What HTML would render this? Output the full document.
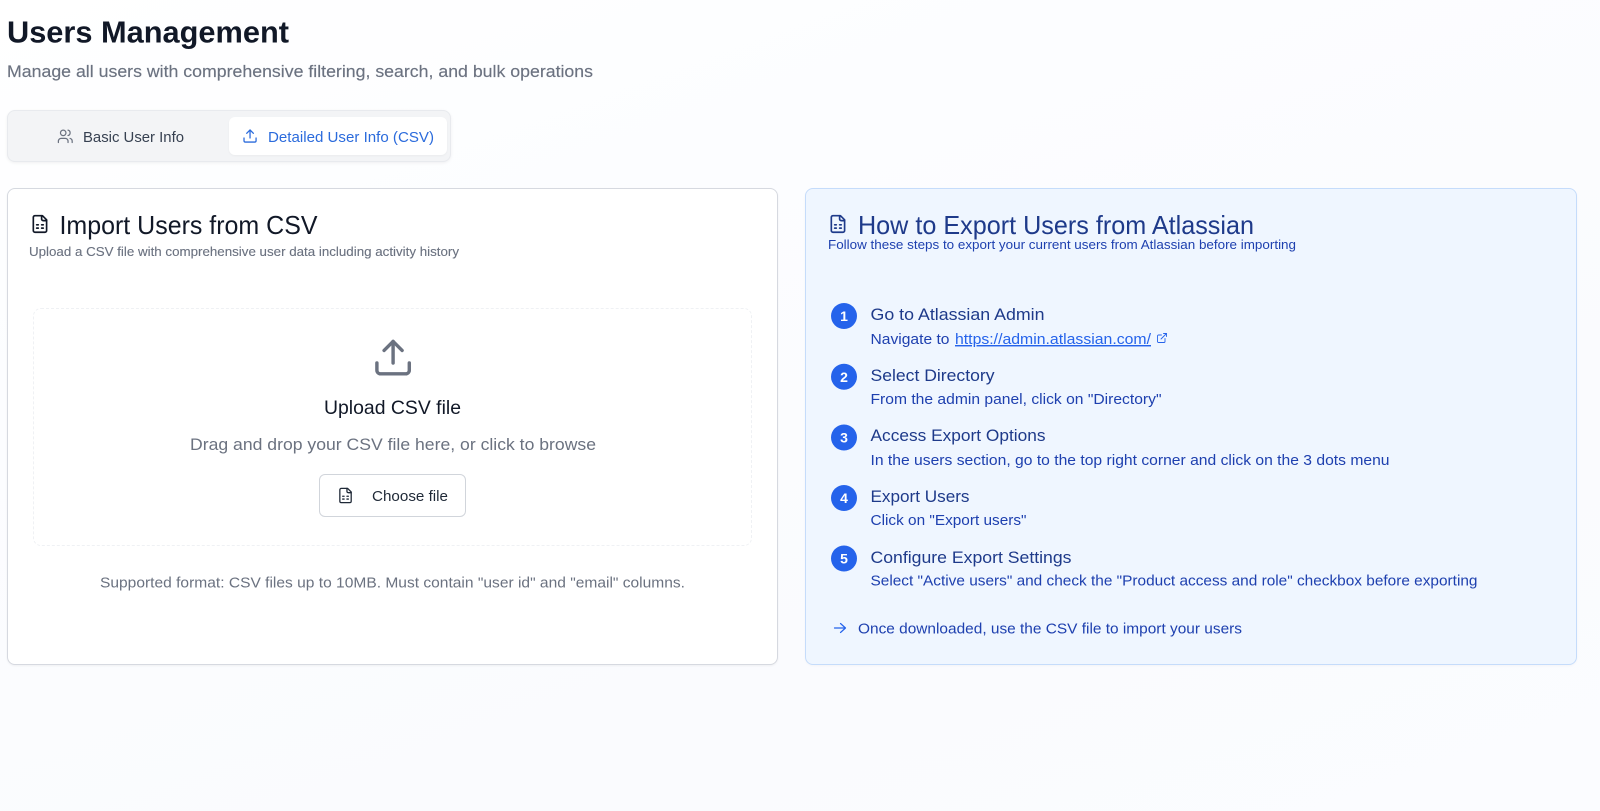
<!DOCTYPE html>
<html lang="en">
<head>
<meta charset="utf-8">
<title>Users Management</title>
<style>
html,body{margin:0;padding:0;width:1600px;height:811px;overflow:hidden}
body{position:relative;background:linear-gradient(160deg,#ffffff 0%,#fcfdff 30%,#fafbfe 70%,#fbfcff 100%);font-family:"Liberation Sans",sans-serif}
.box{position:absolute;box-sizing:border-box}
#tabs{left:7px;top:110px;width:444px;height:52px;background:#f3f4f6;border:1px solid #e8eaee;border-radius:8px;box-shadow:0 1px 3px rgba(0,0,0,.06)}
#active{left:229px;top:117px;width:218px;height:38px;background:#fff;border-radius:6px;box-shadow:0 1px 2px rgba(0,0,0,.04)}
#left{left:7px;top:188px;width:771px;height:477px;background:#fff;border:1px solid #d6d9e0;border-radius:8px;box-shadow:0 1px 2px rgba(0,0,0,.05)}
#right{left:805px;top:188px;width:772px;height:477px;background:#eff6ff;border:1px solid #c5dcfb;border-radius:8px;box-shadow:0 1px 2px rgba(0,0,0,.03)}
#drop{left:33px;top:308px;width:719px;height:238px;border:1.500px dashed #eff1f4;border-radius:8px}
#btn{left:319px;top:474px;width:147px;height:43px;background:#fff;border:1px solid #d1d5db;border-radius:6px}
svg#s{position:absolute;left:0;top:0;filter:blur(.25px)}
text{font-family:"Liberation Sans",sans-serif}
.ic{fill:none;stroke-linecap:round;stroke-linejoin:round}
</style>
</head>
<body>
<div class="box" id="tabs"></div>
<div class="box" id="active"></div>
<div class="box" id="left"></div>
<div class="box" id="right"></div>
<div class="box" id="drop"></div>
<div class="box" id="btn"></div>
<svg id="s" width="1600" height="811" viewBox="0 0 1600 811" xmlns="http://www.w3.org/2000/svg">
<text x="7" y="42.500" font-size="31" font-weight="700" fill="#111827" textLength="282" lengthAdjust="spacingAndGlyphs">Users Management</text>
<text x="7" y="77" font-size="17" fill="#6b7280" stroke="#6b7280" stroke-width=".15" textLength="586" lengthAdjust="spacingAndGlyphs">Manage all users with comprehensive filtering, search, and bulk operations</text>
<text x="83" y="142" font-size="14.500" fill="#374151" textLength="101" lengthAdjust="spacingAndGlyphs">Basic User Info</text>
<text x="268" y="142" font-size="14.500" fill="#2b6bdc" textLength="166" lengthAdjust="spacingAndGlyphs">Detailed User Info (CSV)</text>
<text x="59.500" y="234" font-size="26" fill="#111827" textLength="258" lengthAdjust="spacingAndGlyphs">Import Users from CSV</text>
<text x="29" y="256" font-size="12.500" fill="#6b7280" stroke="#6b7280" stroke-width=".12" textLength="430" lengthAdjust="spacingAndGlyphs">Upload a CSV file with comprehensive user data including activity history</text>
<text x="324" y="414" font-size="19.500" fill="#111827" textLength="137" lengthAdjust="spacingAndGlyphs">Upload CSV file</text>
<text x="190" y="450" font-size="17" fill="#6b7280" textLength="406" lengthAdjust="spacingAndGlyphs">Drag and drop your CSV file here, or click to browse</text>
<text x="372" y="501" font-size="14.500" fill="#1f2937" textLength="76" lengthAdjust="spacingAndGlyphs">Choose file</text>
<text x="100" y="587.500" font-size="14.500" fill="#6b7280" textLength="585" lengthAdjust="spacingAndGlyphs">Supported format: CSV files up to 10MB. Must contain "user id" and "email" columns.</text>

<text x="858" y="234" font-size="26" fill="#1e3a8a" textLength="396" lengthAdjust="spacingAndGlyphs">How to Export Users from Atlassian</text>
<text x="828" y="249" font-size="12.500" fill="#1e40af" textLength="468" lengthAdjust="spacingAndGlyphs">Follow these steps to export your current users from Atlassian before importing</text>

<circle cx="844" cy="316" r="13" fill="#2563eb"/>
<circle cx="844" cy="376.700" r="13" fill="#2563eb"/>
<circle cx="844" cy="437.500" r="13" fill="#2563eb"/>
<circle cx="844" cy="498" r="13" fill="#2563eb"/>
<circle cx="844" cy="558.500" r="13" fill="#2563eb"/>
<g font-size="14" font-weight="700" fill="#fff" text-anchor="middle">
<text x="844" y="321">1</text>
<text x="844" y="382">2</text>
<text x="844" y="442.500">3</text>
<text x="844" y="503">4</text>
<text x="844" y="563.500">5</text>
</g>

<text x="870.500" y="320" font-size="17" fill="#1e3a8a" textLength="174" lengthAdjust="spacingAndGlyphs">Go to Atlassian Admin</text>
<text x="870.500" y="344" font-size="14.500" fill="#1e40af" textLength="79" lengthAdjust="spacingAndGlyphs">Navigate to</text>
<text x="955" y="344" font-size="14.500" fill="#2563eb" text-decoration="underline" textLength="196" lengthAdjust="spacingAndGlyphs">https://admin.atlassian.com/</text>
<g class="ic" stroke="#2563eb" stroke-width="1.800" transform="translate(1156,332) scale(.5)">
<path d="M18 13v6a2 2 0 0 1-2 2H5a2 2 0 0 1-2-2V8a2 2 0 0 1 2-2h6"/><path d="M15 3h6v6"/><path d="M10 14 21 3"/>
</g>

<text x="870.500" y="381" font-size="17" fill="#1e3a8a" textLength="124" lengthAdjust="spacingAndGlyphs">Select Directory</text>
<text x="870.500" y="404" font-size="14.500" fill="#1e40af" textLength="291" lengthAdjust="spacingAndGlyphs">From the admin panel, click on "Directory"</text>

<text x="870.500" y="441" font-size="17" fill="#1e3a8a" textLength="175" lengthAdjust="spacingAndGlyphs">Access Export Options</text>
<text x="870.500" y="465" font-size="14.500" fill="#1e40af" textLength="519" lengthAdjust="spacingAndGlyphs">In the users section, go to the top right corner and click on the 3 dots menu</text>

<text x="870.500" y="502" font-size="17" fill="#1e3a8a" textLength="99" lengthAdjust="spacingAndGlyphs">Export Users</text>
<text x="870.500" y="525" font-size="14.500" fill="#1e40af" textLength="156" lengthAdjust="spacingAndGlyphs">Click on "Export users"</text>

<text x="870.500" y="563" font-size="17" fill="#1e3a8a" textLength="201" lengthAdjust="spacingAndGlyphs">Configure Export Settings</text>
<text x="870.500" y="585.500" font-size="14.500" fill="#1e40af" textLength="607" lengthAdjust="spacingAndGlyphs">Select "Active users" and check the "Product access and role" checkbox before exporting</text>

<text x="858" y="633.500" font-size="14.500" fill="#1e40af" textLength="384" lengthAdjust="spacingAndGlyphs">Once downloaded, use the CSV file to import your users</text>
<path class="ic" stroke="#2563eb" stroke-width="1.200" d="M834.500 628h11M840.500 623.500l5 4.500-5 4.500"/>

<g class="ic" stroke="#6b7280" stroke-width="1.800" transform="translate(57,128) scale(.69)">
<path d="M16 21v-2a4 4 0 0 0-4-4H6a4 4 0 0 0-4 4v2"/><circle cx="9" cy="7" r="4"/><path d="M22 21v-2a4 4 0 0 0-3-3.870"/><path d="M16 3.130a4 4 0 0 1 0 7.750"/>
</g>
<g class="ic" stroke="#2b6bdc" stroke-width="1.900" transform="translate(242,128) scale(.67)">
<path d="M21 15v4a2 2 0 0 1-2 2H5a2 2 0 0 1-2-2v-4"/><path d="M17 8l-5-5-5 5"/><path d="M12 3v12"/>
</g>
<g class="ic" stroke="#111827" stroke-width="2" transform="translate(30,214) scale(.83)">
<path d="M15 2H6a2 2 0 0 0-2 2v16a2 2 0 0 0 2 2h12a2 2 0 0 0 2-2V7z"/><path d="M14 2v4a2 2 0 0 0 2 2h4"/><path d="M8 13h2M14 13h2M8 17h2M14 17h2"/>
</g>
<g class="ic" stroke="#1e3a8a" stroke-width="2" transform="translate(828,214) scale(.83)">
<path d="M15 2H6a2 2 0 0 0-2 2v16a2 2 0 0 0 2 2h12a2 2 0 0 0 2-2V7z"/><path d="M14 2v4a2 2 0 0 0 2 2h4"/><path d="M8 13h2M14 13h2M8 17h2M14 17h2"/>
</g>
<g class="ic" stroke="#1f2937" stroke-width="1.800" transform="translate(337,487) scale(.71)">
<path d="M15 2H6a2 2 0 0 0-2 2v16a2 2 0 0 0 2 2h12a2 2 0 0 0 2-2V7z"/><path d="M14 2v4a2 2 0 0 0 2 2h4"/><path d="M8 13h2M14 13h2M8 17h2M14 17h2"/>
</g>
<g class="ic" stroke="#6b7280" stroke-width="1.900" transform="translate(371.500,336) scale(1.8)">
<path d="M21 15v4a2 2 0 0 1-2 2H5a2 2 0 0 1-2-2v-4"/><path d="M17 8l-5-5-5 5"/><path d="M12 3v12"/>
</g>
</svg>
</body>
</html>
